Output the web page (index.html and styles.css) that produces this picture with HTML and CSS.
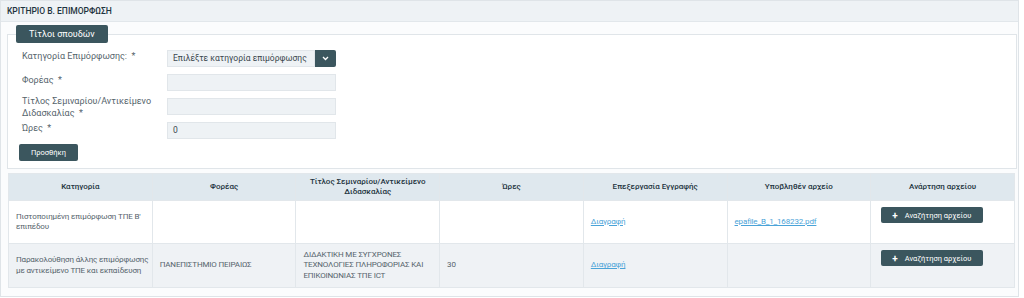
FILE: index.html
```html
<!DOCTYPE html>
<html lang="el">
<head>
<meta charset="utf-8">
<link rel="stylesheet" href="styles.css">
</head>
<body>
<div class="panel">
  <div class="panel-head">ΚΡΙΤΗΡΙΟ Β. ΕΠΙΜΟΡΦΩΣΗ</div>
  <div class="panel-body">
    <fieldset class="box">
      <legend class="tab">Τίτλοι σπουδών</legend>
      <div class="form-row">
        <label class="lbl">Κατηγορία Επιμόρφωσης: &nbsp;*</label>
        <div class="select">
          <span class="select-text">Επιλέξτε κατηγορία επιμόρφωσης</span>
          <span class="select-btn"><svg width="7" height="5" viewBox="0 0 7 5"><path d="M1 1 L3.5 3.5 L6 1" fill="none" stroke="#fff" stroke-width="1.3"/></svg></span>
        </div>
      </div>
      <div class="form-row">
        <label class="lbl">Φορέας &nbsp;*</label>
        <div class="input"></div>
      </div>
      <div class="form-row">
        <label class="lbl lbl-tall">Τίτλος Σεμιναρίου/Αντικείμενο Διδασκαλίας &nbsp;*</label>
        <div class="input"></div>
      </div>
      <div class="form-row">
        <label class="lbl">Ώρες &nbsp;*</label>
        <div class="input">0</div>
      </div>
      <button class="btn btn-add">Προσθήκη</button>
    </fieldset>
    <table class="grid">
      <thead>
        <tr>
          <th>Κατηγορία</th>
          <th>Φορέας</th>
          <th>Τίτλος Σεμιναρίου/Αντικείμενο Διδασκαλίας</th>
          <th>Ώρες</th>
          <th>Επεξεργασία Εγγραφής</th>
          <th>Υποβληθέν αρχείο</th>
          <th>Ανάρτηση αρχείου</th>
        </tr>
      </thead>
      <tbody>
        <tr class="r1">
          <td>Πιστοποιημένη επιμόρφωση ΤΠΕ Β' επιπέδου</td>
          <td></td>
          <td></td>
          <td></td>
          <td><a class="lnk" href="#">Διαγραφή</a></td>
          <td><a class="lnk" href="#">epafile_B_1_168232.pdf</a></td>
          <td class="up"><button class="btn btn-up"><span class="plus">+</span>Αναζήτηση αρχείου</button></td>
        </tr>
        <tr class="r2">
          <td>Παρακολούθηση άλλης επιμόρφωσης με αντικείμενο ΤΠΕ και εκπαίδευση</td>
          <td>ΠΑΝΕΠΙΣΤΗΜΙΟ ΠΕΙΡΑΙΩΣ</td>
          <td>ΔΙΔΑΚΤΙΚΗ ΜΕ ΣΥΓΧΡΟΝΕΣ ΤΕΧΝΟΛΟΓΙΕΣ ΠΛΗΡΟΦΟΡΙΑΣ ΚΑΙ ΕΠΙΚΟΙΝΩΝΙΑΣ ΤΠΕ ICT</td>
          <td>30</td>
          <td><a class="lnk" href="#">Διαγραφή</a></td>
          <td></td>
          <td class="up"><button class="btn btn-up"><span class="plus">+</span>Αναζήτηση αρχείου</button></td>
        </tr>
      </tbody>
    </table>
  </div>
</div>
</body>
</html>
```
FILE: styles.css
```css
* { box-sizing: border-box; }
html, body { margin: 0; padding: 0; background: #ffffff; }
body {
  font-family: Roboto, "Noto Sans", "DejaVu Sans", sans-serif;
  color: #3c4a52;
  width: 1024px;
  height: 298px;
  overflow: hidden;
}
.panel {
  width: 1019px;
  height: 297px;
  border: 1px solid #dfe4e8;
  background: #fbfcfd;
}
.panel-head {
  height: 21px;
  background: #eef2f5;
  border-bottom: 1px solid #e2e7eb;
  font-size: 8.5px;
  font-weight: 500;
  color: #1e3440;
  padding-left: 6px;
  line-height: 20px;
}
.panel-body {
  padding: 3px 1px 0 6px;
}
.box {
  margin: 0;
  padding: 0 8px 7px 8px;
  border: 1px solid #e0e5e9;
  background: #ffffff;
  min-inline-size: 0;
  width: 1010px;
}
.tab {
  background: #3b565e;
  color: #ffffff;
  font-size: 9px;
  height: 18px;
  line-height: 18px;
  padding: 0 13px;
  text-align: left;
  border-radius: 2px;
}
.form-row {
  display: flex;
  align-items: flex-start;
  height: 17px;
  margin-top: 7px;
}
.lbl {
  width: 151px;
  padding-left: 6px;
  padding-right: 4px;
  font-size: 9px;
  line-height: 12px;
  color: #56646c;
  flex: none;
}
.lbl-tall { margin-top: -3px; }
.select {
  display: flex;
  width: 169px;
  height: 17px;
}
.select-text {
  flex: 1;
  background: #eef2f5;
  border: 1px solid #e1e6ea;
  font-size: 8.5px;
  line-height: 15px;
  padding-left: 5px;
  color: #3a464d;
  white-space: nowrap;
}
.select-btn {
  width: 21px;
  background: #3b565e;
  display: flex;
  align-items: center;
  justify-content: center;
  border-radius: 0 2px 2px 0;
}
.input {
  width: 169px;
  height: 17px;
  background: #eef2f5;
  border: 1px solid #e1e6ea;
  font-size: 8.5px;
  line-height: 15px;
  padding-left: 5px;
  color: #3a464d;
}
.btn {
  background: #3b565e;
  color: #ffffff;
  border: none;
  border-radius: 2px;
  font-family: inherit;
  cursor: pointer;
}
.btn-add {
  display: block;
  margin: 5px 0 0 3px;
  width: 59px;
  height: 17px;
  font-size: 7.5px;
  padding: 0;
}
.grid {
  margin: 4px 0 0 1px;
  width: 1007px;
  border-collapse: collapse;
  table-layout: fixed;
  font-size: 8px;
}
.grid th, .grid td {
  border: 1px solid #e2e7eb;
}
.grid th {
  background: #dfe8ee;
  color: #1e3440;
  font-weight: 500;
  height: 27px;
  line-height: 10px;
  padding: 0 4px;
  text-align: center;
  vertical-align: middle;
}
.grid td {
  padding: 0 1px 0 7px;
  line-height: 10.5px;
  letter-spacing: -0.15px;
  vertical-align: middle;
  color: #56646c;
}
.r1 td { background: #ffffff; height: 43px; }
.r2 td { background: #eff2f5; height: 44px; }
.grid td.up { vertical-align: top; padding-top: 6px; padding-left: 10px; letter-spacing: 0; }
.lnk { color: #4aa3d8; text-decoration: underline; }
.btn-up {
  width: 102px;
  height: 16px;
  font-size: 7.5px;
  padding: 0 0 0 11px;
  text-align: left;
  display: flex;
  align-items: center;
}
.plus {
  font-size: 10px;
  font-weight: 700;
  margin-right: 7px;
}
```
